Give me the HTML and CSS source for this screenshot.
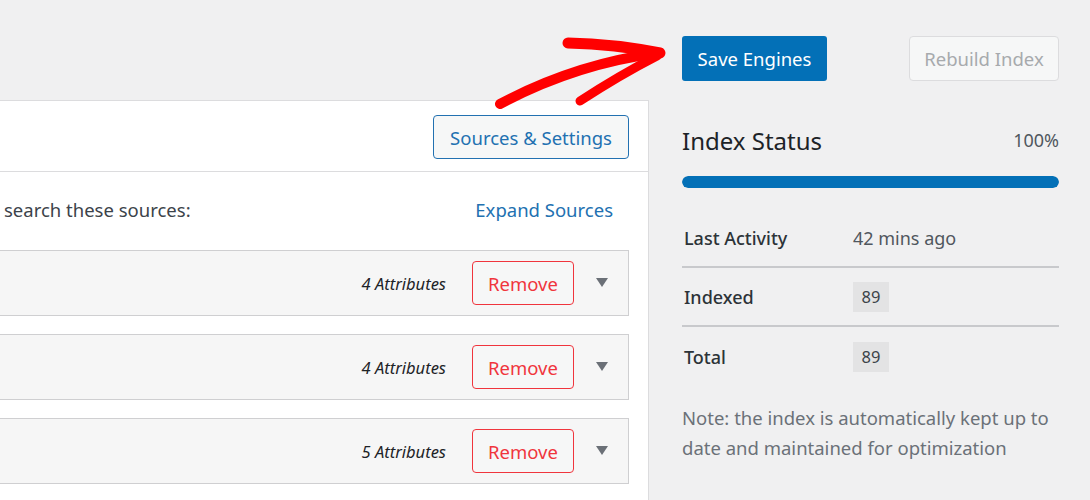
FILE: index.html
```html
<!DOCTYPE html>
<html>
<head>
<meta charset="utf-8">
<link rel="stylesheet" href="styles.css">
</head>
<body>
<div class="page">
  <div class="main">
    <div class="panel">
      <div class="panel-head">
        <button class="btn-outline">Sources &amp; Settings</button>
      </div>
      <div class="sources-bar">
        <span class="sources-text">search these sources:</span>
        <a class="expand">Expand Sources</a>
      </div>
      <div class="source-list">
        <div class="source-row">
          <span class="attrs">4 Attributes</span>
          <button class="btn-remove">Remove</button>
          <span class="caret"></span>
        </div>
        <div class="source-row">
          <span class="attrs">4 Attributes</span>
          <button class="btn-remove">Remove</button>
          <span class="caret"></span>
        </div>
        <div class="source-row">
          <span class="attrs">5 Attributes</span>
          <button class="btn-remove">Remove</button>
          <span class="caret"></span>
        </div>
      </div>
    </div>
  </div>
  <aside class="side">
    <div class="actions">
      <button class="btn-primary">Save Engines</button>
      <button class="btn-disabled">Rebuild Index</button>
    </div>
    <div class="status-head">
      <h2 class="status-title">Index Status</h2>
      <span class="status-pct">100%</span>
    </div>
    <div class="progress"><div class="progress-fill" style="width:100%"></div></div>
    <div class="stats">
      <div class="stat-row">
        <span class="stat-label">Last Activity</span>
        <span class="stat-value">42 mins ago</span>
      </div>
      <div class="stat-row">
        <span class="stat-label">Indexed</span>
        <span class="stat-value"><code class="badge">89</code></span>
      </div>
      <div class="stat-row last">
        <span class="stat-label">Total</span>
        <span class="stat-value"><code class="badge">89</code></span>
      </div>
    </div>
    <p class="note">Note: the index is automatically kept up to date and maintained for optimization</p>
  </aside>
  <svg class="arrow" width="200" height="90" viewBox="480 20 200 90">
    <path d="M500 104 Q 575 64 658 53" fill="none" stroke="#ff0000" stroke-width="10" stroke-linecap="round"/>
    <path d="M568 43 Q 615 44 660 53" fill="none" stroke="#ff0000" stroke-width="11" stroke-linecap="round"/>
    <path d="M580 101 Q 620 75 657 56" fill="none" stroke="#ff0000" stroke-width="9" stroke-linecap="round"/>
  </svg>
</div>
</body>
</html>
```

FILE: styles.css
```css
* { box-sizing: border-box; }
html, body { margin: 0; padding: 0; }
body {
  background: #f0f0f1;
  font-family: "Noto Sans", "Open Sans", sans-serif;
  color: #3c434a;
  width: 1090px;
  height: 500px;
  overflow: hidden;
}
.page {
  position: relative;
  display: flex;
  gap: 33px;
  height: 500px;
}
.main {
  width: 649px;
  padding-top: 100px;
}
.panel {
  background: #fff;
  border: 1px solid #dcdcde;
  border-left: none;
  height: 420px;
}
.panel-head {
  height: 71px;
  border-bottom: 1px solid #dcdcde;
  display: flex;
  justify-content: flex-end;
  align-items: flex-start;
  padding: 14px 19px 0 0;
}
button { font-family: inherit; cursor: pointer; }
.btn-outline {
  height: 44px;
  width: 196px;
  background: #f6f7f7;
  border: 1px solid #2271b1;
  border-radius: 4px;
  color: #2271b1;
  font-size: 18.5px;
  padding: 0;
}
.sources-bar {
  height: 78px;
  display: flex;
  align-items: center;
  justify-content: space-between;
  padding: 0 35px 4px 4px;
  font-size: 18.5px;
}
.sources-text { color: #3c434a; }
.expand { color: #2271b1; }
.source-list {
  display: flex;
  flex-direction: column;
  gap: 18px;
  padding-right: 19px;
}
.source-row {
  height: 66px;
  background: #f6f6f6;
  border: 1px solid #cfcfd1;
  border-left: none;
  display: flex;
  align-items: center;
  justify-content: flex-end;
  padding-right: 20px;
}
.attrs {
  font-style: italic;
  font-size: 16.5px;
  color: #1d2327;
  margin-right: 26px;
}
.btn-remove {
  width: 102px;
  height: 44px;
  border: 1px solid #f0353d;
  border-radius: 4px;
  background: #f6f7f7;
  color: #f0353d;
  font-size: 18.5px;
  padding: 0;
}
.caret {
  width: 0; height: 0;
  border-left: 6px solid transparent;
  border-right: 6px solid transparent;
  border-top: 9px solid #6b7077;
  margin-left: 22px;
  margin-top: -2px;
}
.side {
  width: 377px;
  padding-top: 36px;
}
.actions {
  display: flex;
  justify-content: space-between;
  align-items: flex-start;
}
.btn-primary {
  width: 145px;
  height: 45px;
  background: #0370b7;
  color: #fff;
  border: none;
  border-radius: 3px;
  font-size: 18.5px;
  padding: 0;
}
.btn-disabled {
  width: 150px;
  height: 45px;
  background: #f6f7f7;
  border: 1px solid #dcdcde;
  border-radius: 4px;
  color: #a7aaad;
  font-size: 18.5px;
  padding: 0;
}
.status-head {
  display: flex;
  justify-content: space-between;
  align-items: center;
  margin-top: 42px;
  height: 34px;
}
.status-title {
  margin: 0;
  font-size: 24px;
  font-weight: 400;
  color: #1d2327;
}
.status-pct {
  font-size: 18px;
  color: #50575e;
}
.progress {
  margin-top: 19px;
  height: 12px;
  border-radius: 6px;
  background: #dcdcde;
  overflow: hidden;
}
.progress-fill {
  height: 100%;
  background: #0370b7;
  border-radius: 6px;
}
.stats {
  margin-top: 21px;
}
.stat-row {
  display: flex;
  align-items: center;
  height: 59px;
  border-bottom: 2px solid #c8c9cc;
  padding-left: 2px;
  font-size: 18px;
}
.stat-row.last { border-bottom: none; }
.stat-label {
  width: 169px;
  font-weight: 500;
  color: #2c3338;
}
.stat-value { color: #50575e; }
.badge {
  display: inline-block;
  font-family: inherit;
  font-size: 16.5px;
  background: #e3e3e4;
  color: #3c434a;
  width: 36px;
  height: 30px;
  line-height: 30px;
  text-align: center;
  vertical-align: middle;
}
.note {
  margin: 17px 0 0;
  font-size: 18.5px;
  line-height: 30px;
  color: #6b7178;
}
.arrow {
  position: absolute;
  left: 480px;
  top: 20px;
}
```
